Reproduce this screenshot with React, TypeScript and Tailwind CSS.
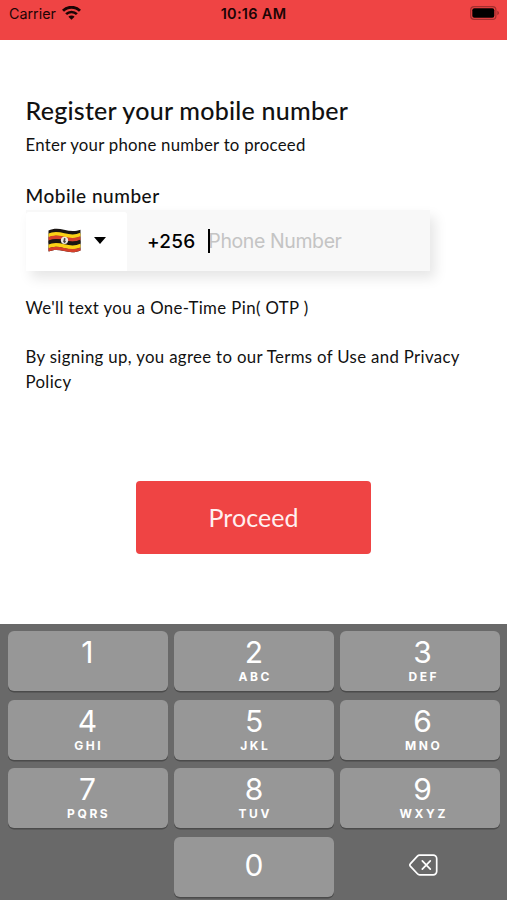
import { useState } from "react";

interface KeyDef {
  digit: string;
  letters?: string;
}

const KEYS: KeyDef[] = [
  { digit: "1" },
  { digit: "2", letters: "ABC" },
  { digit: "3", letters: "DEF" },
  { digit: "4", letters: "GHI" },
  { digit: "5", letters: "JKL" },
  { digit: "6", letters: "MNO" },
  { digit: "7", letters: "PQRS" },
  { digit: "8", letters: "TUV" },
  { digit: "9", letters: "WXYZ" },
];

function WifiIcon() {
  return (
    <svg className="h-[14px] w-[19px]" viewBox="0 0 19 14" fill="none" stroke="#1c0505">
      <path d="M1 4.8a12 12 0 0 1 17 0" strokeWidth="2.9" />
      <path d="M4.1 8.2a7.6 7.6 0 0 1 10.8 0" strokeWidth="2.6" />
      <path d="M9.5 13.8 6.4 10.700a4.400 4.400 0 0 1 6.200 0z" fill="#1c0505" stroke="none" />
    </svg>
  );
}

function BatteryIcon() {
  return (
    <svg className="h-[14px] w-[30px]" viewBox="0 0 30 14">
      <rect x="0.7" y="0.7" width="25.2" height="12.6" rx="3.4" fill="none" stroke="#a32e2e" strokeWidth="1.2" />
      <rect x="2.3" y="2.3" width="22" height="9.4" rx="2" fill="#000" />
      <path d="M27.3 4.8v4.4c1-.4 1.7-1.2 1.7-2.2s-.7-1.8-1.7-2.2z" fill="#a32e2e" />
    </svg>
  );
}

function UgandaFlag() {
  const wave = "c5-2.6 9-2.4 16-.6s12 1.8 17-.6";
  return (
    <svg className="h-[25px] w-[33px]" viewBox="0 0 33 25">
      <defs>
        <clipPath id="flag">
          <path d="M.5 2.6C5 .4 10 .2 16 1.8s12 1.7 16.5 0v20.6c-5 2.2-10 2.2-16.5.6s-11-1.3-15.5.6z" />
        </clipPath>
      </defs>
      <g clipPath="url(#flag)" fill="none" strokeWidth="3.7">
        <rect width="33" height="25" fill="#1a1512" />
        <path d={`M0 7.7${wave}`} stroke="#fbd116" />
        <path d={`M0 11.2${wave}`} stroke="#d5402b" />
        <path d={`M0 14.7${wave}`} stroke="#1a1512" />
        <path d={`M0 18.7${wave}`} stroke="#fbd116" />
        <path d={`M0 22.3${wave}`} stroke="#d5402b" />
        <path d={`M0 25.4${wave}`} stroke="#a83222" strokeWidth="2" />
      </g>
      <circle cx="16.5" cy="12.3" r="3.6" fill="#eee9e4" />
      <path d="M16 9.8l1.8 1-.8 1.4 1 1.4-1.3 1.6-1.6-1.4.5-1.8z" fill="#4b4542" />
    </svg>
  );
}

function DeleteIcon() {
  return (
    <svg className="h-[22px] w-[29px]" viewBox="0 0 29 22" fill="none" stroke="#fff" strokeLinecap="round" strokeLinejoin="round">
      <path d="M10.6 1.2h13.6a3.5 3.5 0 0 1 3.5 3.5v12.6a3.5 3.5 0 0 1-3.5 3.5H10.6a3 3 0 0 1-2.2-1L1.5 12.4a2 2 0 0 1 0-2.8l6.9-7.4a3 3 0 0 1 2.2-1z" strokeWidth="1.7" />
      <path d="m13.3 6.8 8 8.4m0-8.4-8 8.4" strokeWidth="1.7" />
    </svg>
  );
}

function Key({ digit, letters, onPress }: KeyDef & { onPress: (digit: string) => void }) {
  return (
    <button
      className="flex h-[60px] flex-col items-center rounded-[6px] bg-[#979797] pt-[6px] text-white shadow-[0_1.5px_0_#4b4b4b] nth-[3n]:pl-[5px] nth-[3n+1]:pr-[1px]"
      type="button"
      onClick={() => onPress(digit)}
    >
      <span className="text-[30px] leading-[30px] font-normal">{digit}</span>
      {letters && (
        <span className="mt-1 pl-[2.5px] text-[12px] leading-[12px] font-bold tracking-[2.6px]">{letters}</span>
      )}
    </button>
  );
}

export default function App() {
  const [phone, setPhone] = useState("");

  const press = (digit: string) => setPhone((p) => p + digit);

  return (
    <div className="flex h-[900px] w-[507px] flex-col overflow-hidden bg-white font-[Lato,sans-serif] text-[#111]">
      <header className="grid h-10 grid-cols-3 items-start bg-[#ef4444] px-[9px] pt-[6px] font-[Inter,sans-serif] text-[#1c0505]">
        <div className="flex items-start gap-[6px]">
          <span className="text-[14.3px] leading-4">Carrier</span>
          <WifiIcon />
        </div>
        <span className="text-center text-[14.5px] leading-4 font-semibold tracking-[0.3px]">10:16 AM</span>
        <div className="-mr-[2px] flex justify-end">
          <BatteryIcon />
        </div>
      </header>

      <main className="flex flex-1 flex-col px-[25.5px] pt-[53px]">
        <h1 className="text-[25px] leading-[34px] font-medium tracking-[0.24px]">Register your mobile number</h1>
        <p className="mt-[6px] text-[16.8px] leading-6 tracking-[0.25px]">Enter your phone number to proceed</p>

        <label className="mt-[26px] text-[19px] leading-[26px] font-medium tracking-[0.5px]">Mobile number</label>
        <div className="mt-px flex h-[61px] w-[404.5px] bg-[#f8f8f8] shadow-[5px_7px_12px_rgba(0,0,0,0.1)]">
          <button className="mt-[2px] flex w-[101px] items-center justify-center gap-[13px] rounded-t-[3px] bg-white pb-[2px] pl-[2px]" type="button">
            <UgandaFlag />
            <svg className="h-[7px] w-3" viewBox="0 0 12 7">
              <path d="M0 0h12L6 7z" fill="#000" />
            </svg>
          </button>
          <div className="flex items-center pl-[20.5px] font-[Inter,sans-serif]">
            <span className="pt-[3px] text-[19px] font-medium tracking-[0.2px] text-black">+256</span>
            <span className="z-10 ml-[12.5px] h-6 w-[2.5px] bg-black" />
            {phone ? (
              <span className="pt-[3px] text-[19.5px] tracking-[-0.4px]">{phone}</span>
            ) : (
              <span className="-ml-[2px] pt-[3px] text-[19.5px] tracking-[-0.4px] text-[#c4c4c4]">Phone Number</span>
            )}
          </div>
        </div>

        <p className="mt-[25px] text-[16.8px] leading-6 tracking-[0.4px]">We'll text you a One-Time Pin( OTP )</p>
        <p className="mt-[25px] text-[16.8px] leading-[24.5px] tracking-[0.35px] whitespace-nowrap">
          By signing up, you agree to our Terms of Use and Privacy
          <br />
          Policy
        </p>

        <button className="mt-[87px] h-[73px] w-[235px] self-center rounded-[4px] bg-[#ef4444] text-[25px] tracking-[0.05px] text-[#fff0f0]" type="button">
          Proceed
        </button>
      </main>

      <section className="grid h-[276px] grid-cols-3 content-start gap-x-[6.7px] gap-y-[8.7px] bg-[#696969] pt-[7px] pr-[7.3px] pl-[8.3px] font-[Inter,sans-serif]">
        {KEYS.map((key) => (
          <Key key={key.digit} {...key} onPress={press} />
        ))}
        <div />
        <button
          className="flex h-[60px] justify-center rounded-[6px] bg-[#979797] pt-[13px] text-[30px] leading-[30px] font-normal text-white shadow-[0_1.5px_0_#4b4b4b]"
          type="button"
          onClick={() => press("0")}
        >
          0
        </button>
        <button className="flex h-[60px] items-center justify-center pb-[4px] pl-[7px]" type="button" onClick={() => setPhone((p) => p.slice(0, -1))}>
          <DeleteIcon />
        </button>
      </section>
    </div>
  );
}
